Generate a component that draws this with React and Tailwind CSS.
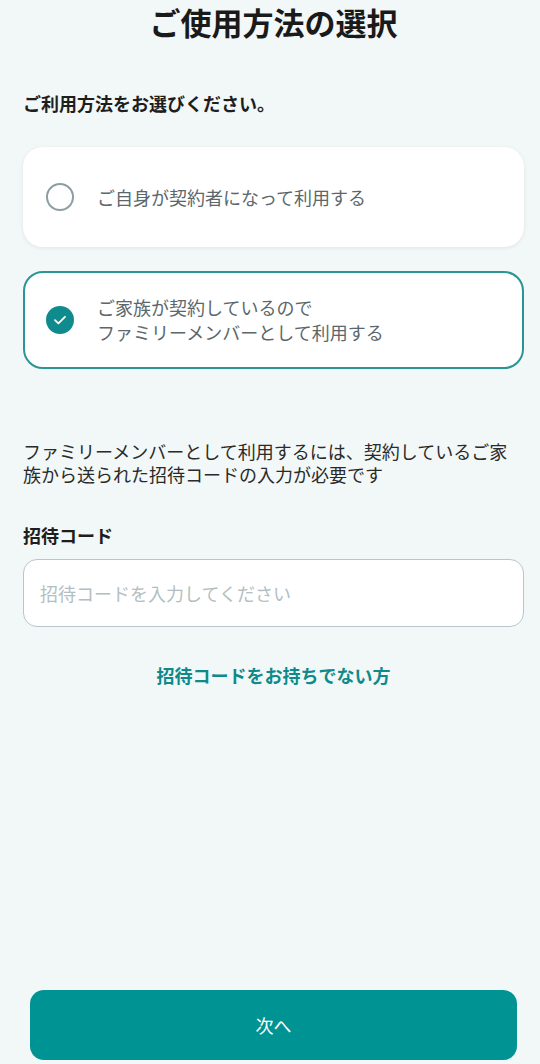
import React, { useState } from 'react';

const Radio = ({ checked }) => {
    if (checked) {
        return (
            <span className="flex items-center justify-center w-7 h-7 rounded-full bg-[#0f8b8d] shrink-0">
                <svg width="16" height="16" viewBox="0 0 16 16" fill="none">
                    <path d="M3 8.2 L6.4 11.4 L13 4.8" stroke="white" strokeWidth="1.8" strokeLinecap="round" strokeLinejoin="round" />
                </svg>
            </span>
        );
    }
    return <span className="block w-7 h-7 rounded-full border-2 border-[#8d9ea2] shrink-0" />;
};

const App = () => {
    const [mode, setMode] = useState('family');
    const [code, setCode] = useState('');

    return (
        <div className="min-h-screen bg-[#f2f7f7] flex flex-col pl-[23px] pr-[16px] font-['Noto_Sans_CJK_JP','Noto_Sans',sans-serif]">
            <h1 className="text-[31px] leading-[44px] font-bold text-center text-[#1a1a1a]">ご使用方法の選択</h1>

            <p className="mt-[46px] text-[18px] leading-[26px] font-bold text-[#1e1e1e]">ご利用方法をお選びください。</p>

            {/* option: self */}
            <button
                className={`mt-[31px] h-[100px] w-full flex items-center gap-[23px] pl-[23px] bg-white rounded-[20px] text-left ${mode === 'self' ? 'border-2 border-[#2b9494]' : 'shadow-[0_1px_4px_rgba(0,0,0,0.08)]'}`}
                onClick={() => setMode('self')}
            >
                <Radio checked={mode === 'self'} />
                <span className="text-[18px] leading-[25px] text-[#5b676b]">ご自身が契約者になって利用する</span>
            </button>

            {/* option: family */}
            <button
                className={`mt-[24px] h-[98px] w-full flex items-center gap-[23px] pl-[21px] bg-white rounded-[20px] text-left ${mode === 'family' ? 'border-2 border-[#2b9494]' : 'shadow-[0_1px_4px_rgba(0,0,0,0.08)]'}`}
                onClick={() => setMode('family')}
            >
                <Radio checked={mode === 'family'} />
                <span className="text-[18px] leading-[25px] text-[#5b676b]">
                    ご家族が契約しているので<br />ファミリーメンバーとして利用する
                </span>
            </button>

            <p className="mt-[71px] text-[18px] leading-[23px] text-[#2a2a2a]">
                ファミリーメンバーとして利用するには、契約しているご家族から送られた招待コードの入力が必要です
            </p>

            <label className="mt-[37px] text-[18px] leading-[24px] font-bold text-[#1e1e1e]">招待コード</label>

            <input
                value={code}
                onChange={(e) => setCode(e.target.value)}
                placeholder="招待コードを入力してください"
                className="mt-[12px] h-[68px] w-full rounded-[14px] border border-[#b9c6cb] bg-white px-4 text-[18px] text-[#2a2a2a] placeholder:text-[#b3bec2] outline-none"
            />

            <a className="mt-[36px] text-center text-[18px] leading-[24px] font-bold text-[#0e8a8a] cursor-pointer">招待コードをお持ちでない方</a>

            <div className="mt-auto pb-[4px] px-[7px]">
                <button className="w-full h-[70px] rounded-[14px] bg-[#009394] text-white text-[18px]">次へ</button>
            </div>
        </div>
    );
};

export default App;
